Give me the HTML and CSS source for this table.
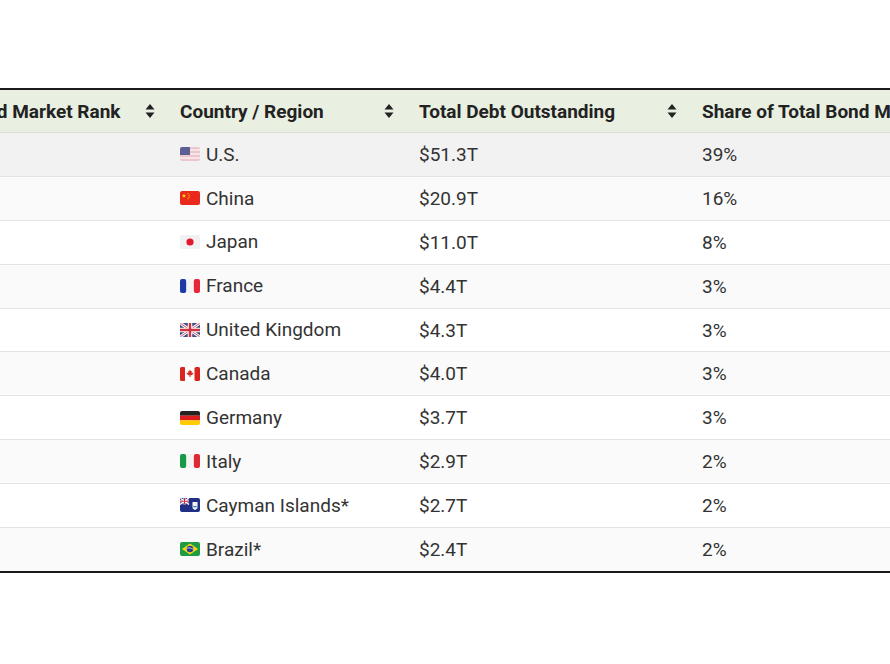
FILE: index.html
```html
<!DOCTYPE html>
<html>
<head>
<meta charset="utf-8">
<link rel="stylesheet" href="styles.css">
</head>
<body>
<table class="bonds">
  <colgroup>
    <col class="c1"><col class="c2"><col class="c3"><col class="c4">
  </colgroup>
  <thead>
    <tr>
      <th><div class="th-in"><span>Global Bond Market Rank</span><svg class="sort" viewBox="0 0 10 16"><path d="M5 1 L9.5 6.5 H0.5 Z M5 15 L9.5 9.5 H0.5 Z"/></svg></div></th>
      <th><div class="th-in"><span>Country / Region</span><svg class="sort" viewBox="0 0 10 16"><path d="M5 1 L9.5 6.5 H0.5 Z M5 15 L9.5 9.5 H0.5 Z"/></svg></div></th>
      <th><div class="th-in"><span>Total Debt Outstanding</span><svg class="sort" viewBox="0 0 10 16"><path d="M5 1 L9.5 6.5 H0.5 Z M5 15 L9.5 9.5 H0.5 Z"/></svg></div></th>
      <th><div class="th-in"><span>Share of Total Bond Market</span><svg class="sort" viewBox="0 0 10 16"><path d="M5 1 L9.5 6.5 H0.5 Z M5 15 L9.5 9.5 H0.5 Z"/></svg></div></th>
    </tr>
  </thead>
  <tbody>
    <tr class="hover">
      <td>1</td>
      <td><span class="country"><svg class="flag us" viewBox="0 0 20 14"><clipPath id="r1"><rect width="20" height="14" rx="2"/></clipPath><g clip-path="url(#r1)"><rect width="20" height="14" fill="#ecc6cc"/><rect y="2" width="20" height="2" fill="#f6e4e6"/><rect y="6" width="20" height="2" fill="#f6e4e6"/><rect y="10" width="20" height="2" fill="#f6e4e6"/><rect width="10" height="8" fill="#5b5f94"/></g></svg>U.S.</span></td>
      <td>$51.3T</td>
      <td>39%</td>
    </tr>
    <tr>
      <td>2</td>
      <td><span class="country"><svg class="flag" viewBox="0 0 20 14"><rect width="20" height="14" rx="2" fill="#e8291c"/><path d="M4 2.5l.6 1.6h1.6l-1.3 1 .5 1.6-1.4-1-1.4 1 .5-1.6-1.3-1h1.6z" fill="#ffde00"/><circle cx="8" cy="2.5" r=".6" fill="#ffde00"/><circle cx="9" cy="4.2" r=".6" fill="#ffde00"/><circle cx="9" cy="6.2" r=".6" fill="#ffde00"/><circle cx="8" cy="7.8" r=".6" fill="#ffde00"/></svg>China</span></td>
      <td>$20.9T</td>
      <td>16%</td>
    </tr>
    <tr>
      <td>3</td>
      <td><span class="country"><svg class="flag" viewBox="0 0 20 14"><rect width="20" height="14" rx="2" fill="#f1f1f1"/><circle cx="10" cy="7" r="3.6" fill="#e2162c"/></svg>Japan</span></td>
      <td>$11.0T</td>
      <td>8%</td>
    </tr>
    <tr>
      <td>4</td>
      <td><span class="country"><svg class="flag" viewBox="0 0 20 14"><rect x="0" width="6.2" height="14" rx="2" fill="#1b3aa6"/><rect x="7" width="6" height="14" fill="#f4f4f4"/><rect x="13.8" width="6.2" height="14" rx="2" fill="#e8263a"/></svg>France</span></td>
      <td>$4.4T</td>
      <td>3%</td>
    </tr>
    <tr>
      <td>5</td>
      <td><span class="country"><svg class="flag" viewBox="0 0 20 14"><clipPath id="r5"><rect width="20" height="14" rx="2"/></clipPath><g clip-path="url(#r5)"><rect width="20" height="14" fill="#3f4a86"/><path d="M0 0L20 14M20 0L0 14" stroke="#fff" stroke-width="3"/><path d="M0 0L20 14M20 0L0 14" stroke="#d24a5c" stroke-width="1"/><path d="M10 0V14M0 7H20" stroke="#fff" stroke-width="4.5"/><path d="M10 0V14M0 7H20" stroke="#d2313f" stroke-width="2.4"/></g></svg>United Kingdom</span></td>
      <td>$4.3T</td>
      <td>3%</td>
    </tr>
    <tr>
      <td>6</td>
      <td><span class="country"><svg class="flag" viewBox="0 0 20 14"><rect x="0" width="5.5" height="14" rx="1.5" fill="#d9241f"/><rect x="5" width="10" height="14" fill="#fff"/><rect x="14.5" width="5.5" height="14" rx="1.5" fill="#d9241f"/><path d="M10 2.6l1 1.9 1-.5-.4 2.6 1.5-1.1.4 1-1.3.9.4.7-2.1.2V10H9.5V8.3l-2.1-.2.4-.7-1.3-.9.4-1 1.5 1.1L8 4l1 .5z" fill="#d9241f"/></svg>Canada</span></td>
      <td>$4.0T</td>
      <td>3%</td>
    </tr>
    <tr>
      <td>7</td>
      <td><span class="country"><svg class="flag" viewBox="0 0 20 14"><clipPath id="r7"><rect width="20" height="14" rx="2"/></clipPath><g clip-path="url(#r7)"><rect width="20" height="4.7" fill="#222"/><rect y="4.6" width="20" height="4.8" fill="#dd1d1d"/><rect y="9.3" width="20" height="4.7" fill="#ffcc00"/></g></svg>Germany</span></td>
      <td>$3.7T</td>
      <td>3%</td>
    </tr>
    <tr>
      <td>8</td>
      <td><span class="country"><svg class="flag" viewBox="0 0 20 14"><rect x="0" width="6.2" height="14" rx="2" fill="#169a47"/><rect x="7" width="6" height="14" fill="#f4f4f4"/><rect x="13.8" width="6.2" height="14" rx="2" fill="#dd2a36"/></svg>Italy</span></td>
      <td>$2.9T</td>
      <td>2%</td>
    </tr>
    <tr>
      <td>9</td>
      <td><span class="country"><svg class="flag" viewBox="0 0 20 14"><clipPath id="r9"><rect width="20" height="14" rx="2"/></clipPath><g clip-path="url(#r9)"><rect width="20" height="14" fill="#1f2f86"/><rect width="9" height="6.5" fill="#3b4690"/><path d="M0 0L9 6.5M9 0L0 6.5" stroke="#fff" stroke-width="1.4"/><path d="M4.5 0V6.5M0 3.25H9" stroke="#fff" stroke-width="2"/><path d="M4.5 0V6.5M0 3.25H9" stroke="#d8263a" stroke-width="1"/><path d="M12.5 4h5v5.5c0 1.5-2.5 2.5-2.5 2.5s-2.5-1-2.5-2.5z" fill="#f2f2f2"/><path d="M13.3 8h3.4v1.2h-3.4z" fill="#3a7ad0"/></g></svg>Cayman Islands*</span></td>
      <td>$2.7T</td>
      <td>2%</td>
    </tr>
    <tr>
      <td>10</td>
      <td><span class="country"><svg class="flag" viewBox="0 0 20 14"><rect width="20" height="14" rx="2" fill="#1d9c44"/><path d="M10 1.6L18 7 10 12.4 2 7z" fill="#fbd516"/><circle cx="10" cy="7" r="3.3" fill="#233c8e"/><path d="M6.9 6.2c2-.6 4.3-.3 6.1 1" stroke="#fff" stroke-width=".7" fill="none"/></svg>Brazil*</span></td>
      <td>$2.4T</td>
      <td>2%</td>
    </tr>
  </tbody>
</table>
</body>
</html>
```
FILE: styles.css
```css
html, body {
  margin: 0;
  padding: 0;
  background: #ffffff;
  overflow: hidden;
}
body {
  width: 890px;
  height: 664px;
  font-family: Roboto, "Liberation Sans", Arial, sans-serif;
  color: #333333;
}
.bonds {
  border-collapse: collapse;
  table-layout: fixed;
  width: 1106px;
  margin-top: 88px;
  margin-left: -108px;
  border-top: 2px solid #1a1a1a;
  border-bottom: 2px solid #1a1a1a;
}
.c1 { width: 276px; }
.c2 { width: 239px; }
.c3 { width: 283px; }
.c4 { width: 308px; }
.bonds th {
  background: #e9efe1;
  height: 42px;
  padding: 0 13px 0 12px;
  text-align: left;
  font-size: 19px;
  font-weight: 700;
  color: #222222;
  border-bottom: 1px solid #dcdcdc;
  white-space: nowrap;
}
.th-in {
  display: flex;
  align-items: center;
  justify-content: space-between;
}
.sort {
  width: 10px;
  height: 16px;
  fill: #222222;
  flex: none;
}
.bonds td {
  height: 42.9px;
  padding: 0 12px;
  font-size: 19px;
  color: #333333;
  border-bottom: 1px solid #e3e3e3;
  white-space: nowrap;
}
.bonds tbody tr:nth-child(even) td { background: #fafafa; }
.bonds tbody tr:nth-child(odd) td { background: #ffffff; }
.bonds tbody tr.hover td { background: #f2f2f2; }
.country {
  display: inline-flex;
  align-items: center;
  gap: 6px;
}
.flag {
  width: 20px;
  height: 14px;
  flex: none;
}
```
